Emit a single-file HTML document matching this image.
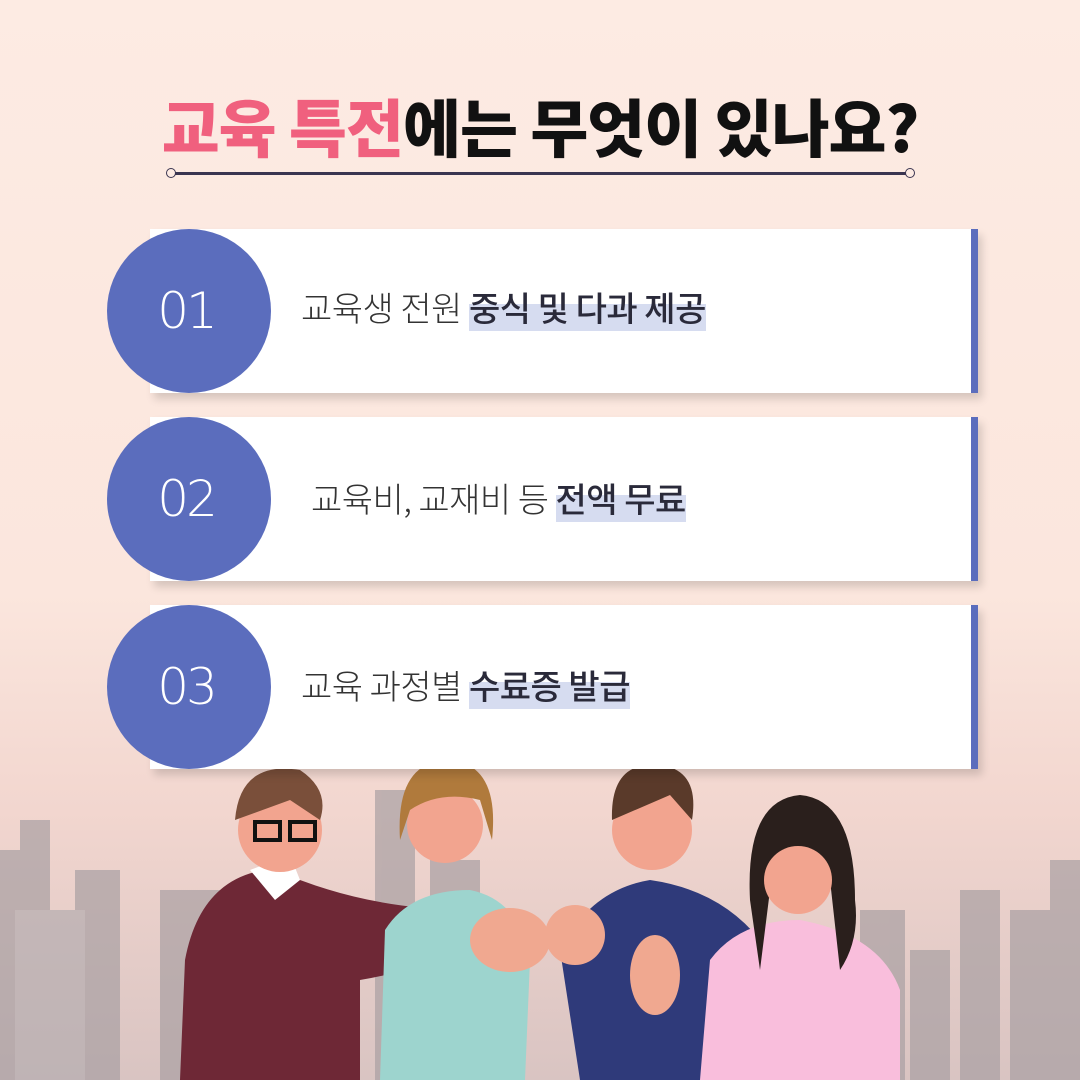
<!DOCTYPE html>
<html><head><meta charset="utf-8"><style>
*{margin:0;padding:0;box-sizing:border-box}
body{width:1080px;height:1080px;overflow:hidden;position:relative;font-family:"Liberation Sans","Noto Sans CJK KR",sans-serif;background:linear-gradient(#fdebe3 0%,#fbe6dd 55%,#f2d6cf 75%,#d9c4c2 100%)}
.title{position:absolute;top:80px;left:0;width:1080px;text-align:center;font-size:63px;font-weight:900;letter-spacing:-1px;color:#111;font-family:"Noto Sans CJK KR",sans-serif}
.title span{color:#f0607e}
.line{position:absolute;top:172px;left:172px;width:736px;height:3px;background:#3a3550}
.dot{position:absolute;top:168px;width:10px;height:10px;border:1.5px solid #3a3550;border-radius:50%;background:#fdebe3}
.card{position:absolute;left:150px;width:828px;height:164px;background:#fff;border-right:7px solid #5b6dbd;box-shadow:4px 6px 8px rgba(0,0,0,.15)}
.circ{position:absolute;left:107px;width:164px;height:164px;border-radius:50%;background:#5b6dbd;color:#fff;font-size:50px;display:flex;align-items:center;justify-content:center;font-family:"DejaVu Sans",sans-serif;font-weight:200;letter-spacing:-3px;padding-right:6px}
.txt{position:absolute;left:301px;font-size:34px;color:#333;font-family:"Noto Sans CJK KR",sans-serif;font-weight:300;letter-spacing:-.5px}
.txt b{font-weight:500;color:#2a2a3a;background:linear-gradient(transparent 45%,#d6dcf0 45%)}
</style></head><body>
<svg style="position:absolute;left:0;top:760px" width="1080" height="320">
<g fill="#a9a0a3" opacity=".7">
<rect x="0" y="90" width="50" height="230"/><rect x="20" y="60" width="30" height="60"/><rect x="75" y="110" width="45" height="210"/><rect x="15" y="150" width="70" height="170" fill="#b5adb0"/><rect x="160" y="130" width="60" height="190"/><rect x="375" y="30" width="40" height="290"/><rect x="430" y="100" width="50" height="220"/><rect x="860" y="150" width="45" height="170"/><rect x="910" y="190" width="40" height="130"/><rect x="960" y="130" width="40" height="190"/><rect x="1010" y="150" width="70" height="170"/><rect x="1050" y="100" width="30" height="220"/></g>
<path d="M180 320 L185 200 Q200 120 265 110 L300 120 Q380 150 470 150 L490 180 Q420 210 360 220 L360 320Z" fill="#6e2836"/>
<path d="M250 110 L275 140 L300 120 L290 95Z" fill="#fff"/>
<circle cx="280" cy="70" r="42" fill="#f2a48f"/><path d="M235 60 Q240 0 300 10 Q330 30 320 60 L290 40 Z" fill="#7a4f3a"/>
<path d="M255 62h25v18h-25zM290 62h25v18h-25z" fill="none" stroke="#111" stroke-width="4"/>
<path d="M380 320 L385 170 Q410 130 470 130 Q520 140 530 200 L525 320Z" fill="#9dd4ce"/>
<circle cx="445" cy="65" r="38" fill="#f2a48f"/><path d="M400 80 Q395 0 450 0 Q500 5 492 80 L480 40 Q440 30 410 50Z" fill="#b07a3c"/>
<path d="M580 320 L560 190 Q590 130 650 120 Q720 130 760 180 L740 320Z" fill="#2f3a7a"/>
<circle cx="652" cy="70" r="40" fill="#f2a48f"/><path d="M612 60 Q610 0 660 5 Q700 10 692 60 L670 35Z" fill="#5a3a2a"/>
<ellipse cx="510" cy="180" rx="40" ry="32" fill="#f0a890"/><ellipse cx="575" cy="175" rx="30" ry="30" fill="#f0a890"/><ellipse cx="655" cy="215" rx="25" ry="40" fill="#f0a890"/>
<path d="M700 320 L710 200 Q740 160 800 160 Q880 175 900 230 L900 320Z" fill="#f9bedc"/>
<path d="M750 140 Q745 40 800 35 Q855 40 855 140 Q860 180 840 210 L830 120 Q800 100 770 130 L760 210Z" fill="#2a1f1c"/>
<circle cx="798" cy="120" r="34" fill="#f2a48f"/>
</svg>
<div class="title"><span>교육 특전</span>에는 무엇이 있나요?</div>
<div class="line"></div><div class="dot" style="left:166px"></div><div class="dot" style="left:905px"></div>
<div class="card" style="top:229px"></div><div class="circ" style="top:229px">01</div><div class="txt" style="top:282px">교육생 전원 <b>중식 및 다과 제공</b></div>
<div class="card" style="top:417px"></div><div class="circ" style="top:417px">02</div><div class="txt" style="top:473px;left:311px">교육비, 교재비 등 <b>전액 무료</b></div>
<div class="card" style="top:605px"></div><div class="circ" style="top:605px">03</div><div class="txt" style="top:660px">교육 과정별 <b>수료증 발급</b></div>
</body></html>
